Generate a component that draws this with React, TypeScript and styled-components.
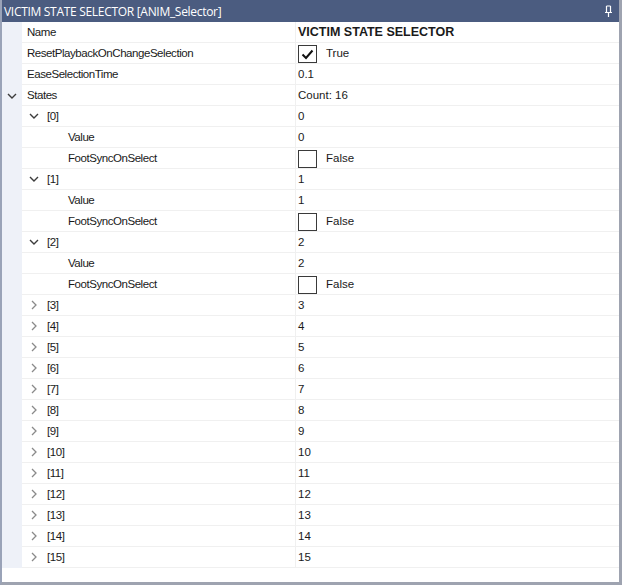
import React from "react";
import styled, { createGlobalStyle } from "styled-components";

const Global = createGlobalStyle`
  html, body { margin: 0; padding: 0; background: #ffffff; }
  * { box-sizing: border-box; }
`;

const Window = styled.div`
  width: 622px;
  height: 585px;
  display: flex;
  flex-direction: column;
  background: #ffffff;
  border-left: 2px solid #9aa3b8;
  border-right: 3px solid #9ea3b0;
  border-bottom: 3px solid #9ea3b0;
  font-family: "Liberation Sans", Arial, sans-serif;
  overflow: hidden;
`;

const TitleBar = styled.div`
  height: 22px;
  margin-left: -2px;
  margin-right: -3px;
  flex: none;
  display: flex;
  align-items: center;
  justify-content: space-between;
  padding: 0 9px 0 4px;
  background: #4b5c80;
  color: #ffffff;
  font-family: "Open Sans", "Liberation Sans", sans-serif;
  font-size: 12px;
  letter-spacing: -0.3px;
`;

const Body = styled.div`
  flex: 1;
  display: flex;
  flex-direction: column;
  background: #ffffff;
`;

const Row = styled.div`
  display: flex;
  height: 21px;
  font-size: 12px;
  color: #1a1a1a;
`;

const Gutter = styled.div`
  width: 20px;
  flex: none;
  background: #eef1f8;
  display: flex;
  align-items: center;
  justify-content: center;
`;

const LabelCell = styled.div<{ $pad: number }>`
  width: 273px;
  flex: none;
  display: flex;
  align-items: center;
  padding-left: ${(p) => p.$pad}px;
  border-bottom: 1px solid #f0f0f0;
  white-space: nowrap;
  font-size: 11.5px;
  letter-spacing: -0.45px;
`;

const ExpanderSlot = styled.div`
  width: 21px;
  flex: none;
  display: flex;
  align-items: center;
  justify-content: center;
  padding-right: 5px;
`;

const ValueCell = styled.div<{ $bold?: boolean }>`
  flex: 1;
  display: flex;
  align-items: center;
  padding-left: 2px;
  border-left: 1px solid #f0f0f0;
  border-bottom: 1px solid #f0f0f0;
  font-weight: ${(p) => (p.$bold ? 700 : 400)};
  font-size: ${(p) => (p.$bold ? "12.5px" : "11.5px")};
  white-space: nowrap;
`;

const CheckBox = styled.div`
  width: 19px;
  height: 18px;
  border: 1.5px solid #3a3a3a;
  background: #ffffff;
  display: flex;
  align-items: center;
  justify-content: center;
  margin-right: 9px;
  margin-top: 2px;
`;

const ChevronDown = () => (
  <svg width="10" height="6" viewBox="0 0 10 6">
    <path d="M1 1 L5 5 L9 1" fill="none" stroke="#3c3c3c" strokeWidth="1.4" />
  </svg>
);

const ChevronRight = () => (
  <svg width="6" height="10" viewBox="0 0 6 10">
    <path d="M1 1 L5 5 L1 9" fill="none" stroke="#8a8a8a" strokeWidth="1.3" />
  </svg>
);

const Check = () => (
  <svg width="13" height="11" viewBox="0 0 13 11">
    <path d="M1.5 5.5 L5 9 L11.5 1.5" fill="none" stroke="#111" strokeWidth="2" />
  </svg>
);

const Pin = () => (
  <svg width="9" height="13" viewBox="0 0 9 13">
    <path d="M2.5 1 V7 M6.5 1 V7 M1 7.5 H8 M4.5 7.5 V12 M2.5 1 H6.5" fill="none" stroke="#ffffff" strokeWidth="1.2" />
  </svg>
);

type Item = {
  label: string;
  level: number;
  exp?: "open" | "closed";
  value?: string;
  check?: boolean;
  bold?: boolean;
};

const items: Item[] = [
  { label: "Name", level: 0, value: "VICTIM STATE SELECTOR", bold: true },
  { label: "ResetPlaybackOnChangeSelection", level: 0, check: true, value: "True" },
  { label: "EaseSelectionTime", level: 0, value: "0.1" },
  { label: "States", level: 0, exp: "open", value: "Count: 16" },
];
for (let i = 0; i < 16; i++) {
  if (i < 3) {
    items.push({ label: `[${i}]`, level: 1, exp: "open", value: String(i) });
    items.push({ label: "Value", level: 2, value: String(i) });
    items.push({ label: "FootSyncOnSelect", level: 2, check: false, value: "False" });
  } else {
    items.push({ label: `[${i}]`, level: 1, exp: "closed", value: String(i) });
  }
}

const PropRow = ({ item }: { item: Item }) => {
  const pad = item.level === 0 ? 5 : 4 + (item.level - 1) * 21;
  const chevron = item.exp === "open" ? <ChevronDown /> : item.exp === "closed" ? <ChevronRight /> : null;
  return (
    <Row>
      <Gutter>{item.level === 0 ? chevron : null}</Gutter>
      <LabelCell $pad={pad}>
        {item.level > 0 && <ExpanderSlot>{chevron}</ExpanderSlot>}
        {item.label}
      </LabelCell>
      <ValueCell $bold={item.bold}>
        {item.check !== undefined && <CheckBox>{item.check && <Check />}</CheckBox>}
        {item.value}
      </ValueCell>
    </Row>
  );
};

export default function App() {
  return (
    <>
      <Global />
      <Window>
        <TitleBar>
          <span>VICTIM STATE SELECTOR [ANIM_Selector]</span>
          <Pin />
        </TitleBar>
        <Body>
          {items.map((it, i) => (
            <PropRow key={i} item={it} />
          ))}
        </Body>
      </Window>
    </>
  );
}
